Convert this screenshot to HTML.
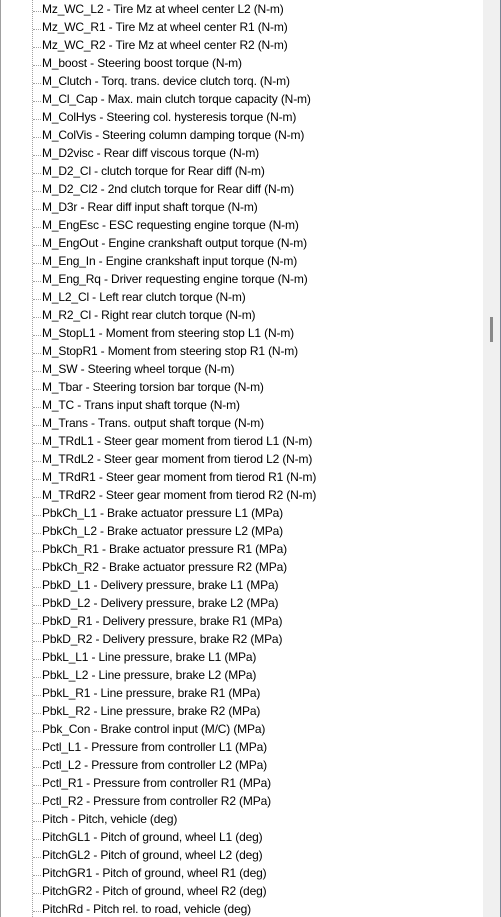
<!DOCTYPE html>
<html><head><meta charset="utf-8"><style>
html,body{margin:0;padding:0;background:#fff;width:501px;height:917px;overflow:hidden;position:relative}
.lb{position:absolute;left:0;top:0;width:1px;height:917px;background:#a0a0a0}
.vl{position:absolute;left:32px;top:0;height:917px;border-left:1px dotted #a0a0a0}
.list{position:absolute;left:0;top:2px}
.r{height:18px;line-height:18px;position:relative;font:12px "Liberation Sans",sans-serif;color:#000;white-space:nowrap;padding-left:42px;letter-spacing:-0.15px}
.r:before{content:"";position:absolute;left:33px;top:9px;width:8px;border-top:1px dotted #a0a0a0}
.sb{position:absolute;left:483px;top:0;width:17px;height:917px;background:#f0f0f0}
.th{position:absolute;left:490px;top:317px;width:3px;height:25px;background:#8a8a8a}
.rb{position:absolute;left:500px;top:0;width:1px;height:917px;background:#7a8594}
</style></head><body>
<div class="lb"></div><div class="vl"></div>
<div class="list">
<div class="r">Mz_WC_L2 - Tire Mz at wheel center L2 (N-m)</div>
<div class="r">Mz_WC_R1 - Tire Mz at wheel center R1 (N-m)</div>
<div class="r">Mz_WC_R2 - Tire Mz at wheel center R2 (N-m)</div>
<div class="r">M_boost - Steering boost torque (N-m)</div>
<div class="r">M_Clutch - Torq. trans. device clutch torq. (N-m)</div>
<div class="r">M_Cl_Cap - Max. main clutch torque capacity (N-m)</div>
<div class="r">M_ColHys - Steering col. hysteresis torque (N-m)</div>
<div class="r">M_ColVis - Steering column damping torque (N-m)</div>
<div class="r">M_D2visc - Rear diff viscous torque (N-m)</div>
<div class="r">M_D2_Cl - clutch torque for Rear diff (N-m)</div>
<div class="r">M_D2_Cl2 - 2nd clutch torque for Rear diff (N-m)</div>
<div class="r">M_D3r - Rear diff input shaft torque (N-m)</div>
<div class="r">M_EngEsc - ESC requesting engine torque (N-m)</div>
<div class="r">M_EngOut - Engine crankshaft output torque (N-m)</div>
<div class="r">M_Eng_In - Engine crankshaft input torque (N-m)</div>
<div class="r">M_Eng_Rq - Driver requesting engine torque (N-m)</div>
<div class="r">M_L2_Cl - Left rear clutch torque (N-m)</div>
<div class="r">M_R2_Cl - Right rear clutch torque (N-m)</div>
<div class="r">M_StopL1 - Moment from steering stop L1 (N-m)</div>
<div class="r">M_StopR1 - Moment from steering stop R1 (N-m)</div>
<div class="r">M_SW - Steering wheel torque (N-m)</div>
<div class="r">M_Tbar - Steering torsion bar torque (N-m)</div>
<div class="r">M_TC - Trans input shaft torque (N-m)</div>
<div class="r">M_Trans - Trans. output shaft torque (N-m)</div>
<div class="r">M_TRdL1 - Steer gear moment from tierod L1 (N-m)</div>
<div class="r">M_TRdL2 - Steer gear moment from tierod L2 (N-m)</div>
<div class="r">M_TRdR1 - Steer gear moment from tierod R1 (N-m)</div>
<div class="r">M_TRdR2 - Steer gear moment from tierod R2 (N-m)</div>
<div class="r">PbkCh_L1 - Brake actuator pressure L1 (MPa)</div>
<div class="r">PbkCh_L2 - Brake actuator pressure L2 (MPa)</div>
<div class="r">PbkCh_R1 - Brake actuator pressure R1 (MPa)</div>
<div class="r">PbkCh_R2 - Brake actuator pressure R2 (MPa)</div>
<div class="r">PbkD_L1 - Delivery pressure, brake L1 (MPa)</div>
<div class="r">PbkD_L2 - Delivery pressure, brake L2 (MPa)</div>
<div class="r">PbkD_R1 - Delivery pressure, brake R1 (MPa)</div>
<div class="r">PbkD_R2 - Delivery pressure, brake R2 (MPa)</div>
<div class="r">PbkL_L1 - Line pressure, brake L1 (MPa)</div>
<div class="r">PbkL_L2 - Line pressure, brake L2 (MPa)</div>
<div class="r">PbkL_R1 - Line pressure, brake R1 (MPa)</div>
<div class="r">PbkL_R2 - Line pressure, brake R2 (MPa)</div>
<div class="r">Pbk_Con - Brake control input (M/C) (MPa)</div>
<div class="r">Pctl_L1 - Pressure from controller L1 (MPa)</div>
<div class="r">Pctl_L2 - Pressure from controller L2 (MPa)</div>
<div class="r">Pctl_R1 - Pressure from controller R1 (MPa)</div>
<div class="r">Pctl_R2 - Pressure from controller R2 (MPa)</div>
<div class="r">Pitch - Pitch, vehicle (deg)</div>
<div class="r">PitchGL1 - Pitch of ground, wheel L1 (deg)</div>
<div class="r">PitchGL2 - Pitch of ground, wheel L2 (deg)</div>
<div class="r">PitchGR1 - Pitch of ground, wheel R1 (deg)</div>
<div class="r">PitchGR2 - Pitch of ground, wheel R2 (deg)</div>
<div class="r">PitchRd - Pitch rel. to road, vehicle (deg)</div>
</div>
<div class="sb"></div><div class="th"></div><div class="rb"></div>
</body></html>
